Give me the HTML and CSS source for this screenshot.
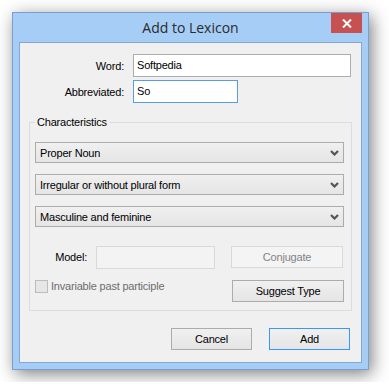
FILE: index.html
```html
<!DOCTYPE html>
<html>
<head>
<meta charset="utf-8">
<link rel="stylesheet" href="styles.css">
</head>
<body>
<div class="window">
  <div class="titlebar">
    <div class="title">Add to Lexicon</div>
    <div class="close">
      <svg width="10" height="9" viewBox="0 0 10 9"><path d="M1 0.5 L9 8.5 M9 0.5 L1 8.5" stroke="#fff" stroke-width="2" fill="none"/></svg>
    </div>
  </div>
  <div class="client">
    <div class="form-grid">
      <span class="lbl">Word:</span>
      <div class="input word">Softpedia</div>
      <span class="lbl">Abbreviated:</span>
      <div class="input abbr">So</div>
    </div>
    <fieldset class="group">
      <legend>Characteristics</legend>
      <div class="combos">
        <div class="combo"><span>Proper Noun</span><svg class="chev" width="9" height="6" viewBox="0 0 9 6"><path d="M1 1 L4.5 4.5 L8 1" stroke="#555" stroke-width="2.2" fill="none"/></svg></div>
        <div class="combo"><span>Irregular or without plural form</span><svg class="chev" width="9" height="6" viewBox="0 0 9 6"><path d="M1 1 L4.5 4.5 L8 1" stroke="#555" stroke-width="2.2" fill="none"/></svg></div>
        <div class="combo"><span>Masculine and feminine</span><svg class="chev" width="9" height="6" viewBox="0 0 9 6"><path d="M1 1 L4.5 4.5 L8 1" stroke="#555" stroke-width="2.2" fill="none"/></svg></div>
      </div>
      <div class="model-row">
        <span class="model-label">Model:</span>
        <div class="model-input"></div>
        <div class="btn disabled conjugate">Conjugate</div>
      </div>
      <div class="check-row">
        <div class="check"><span class="checkbox"></span><span>Invariable past participle</span></div>
        <div class="btn suggest">Suggest Type</div>
      </div>
    </fieldset>
    <div class="actions">
      <div class="btn">Cancel</div>
      <div class="btn default">Add</div>
    </div>
  </div>
</div>
</body>
</html>
```
FILE: styles.css
```css
* { box-sizing: border-box; }
body {
  margin: 0;
  padding: 12px;
  background: #fff;
  font-family: "Liberation Sans", Arial, sans-serif;
  font-size: 11px;
  letter-spacing: -0.2px;
  color: #000;
}
.window {
  width: 357px;
  height: 358px;
  border: 1px solid #7b9fcd;
  background: #a6cdf5;
  padding: 0 6px 6px;
  box-shadow: 3px 4px 16px rgba(0, 0, 0, 0.5);
  display: flex;
  flex-direction: column;
}
.titlebar {
  height: 29px;
  margin: 0 -6px;
  display: grid;
  grid-template-columns: 1fr auto 1fr;
  align-items: start;
}
.title {
  grid-column: 2;
  line-height: 29px;
  font-family: "Open Sans", "Noto Sans", sans-serif;
  font-size: 14px;
  letter-spacing: 0;
  color: #2b2b2b;
}
.close {
  grid-column: 3;
  justify-self: end;
  width: 31px;
  height: 20px;
  margin-right: 6px;
  background: #c75050;
  display: flex;
  align-items: center;
  justify-content: center;
}
.close svg { display: block; }
.client {
  flex: 1;
  border: 1px solid #86a7d0;
  background: #f0f0f0;
  padding-top: 11px;
}
.form-grid {
  display: grid;
  grid-template-columns: 104px auto;
  column-gap: 9px;
  row-gap: 3px;
  justify-items: start;
}
.lbl {
  justify-self: end;
  align-self: center;
}
.input {
  height: 23px;
  background: #fff;
  border: 1px solid #abadb3;
  padding: 0 3px;
  line-height: 20px;
}
.word { width: 218px; }
.abbr { width: 105px; border-color: #569de5; }
.group {
  margin: 11px 9px 0;
  padding: 12px 7px 8px 5px;
  border: 1px solid #dcdcdc;
  min-width: 0;
}
.group legend {
  margin-left: 0;
  padding: 0 2px;
  line-height: 16px;
}
.combos {
  display: flex;
  flex-direction: column;
  gap: 11px;
}
.combo {
  height: 21px;
  border: 1px solid #acacac;
  background: linear-gradient(#f0f0f0, #e5e5e5);
  display: flex;
  align-items: center;
  justify-content: space-between;
  padding: 0 4px;
}
.chev { display: block; }
.model-row {
  display: flex;
  align-items: flex-start;
  margin-top: 19px;
}
.model-label {
  width: 52px;
  text-align: right;
  line-height: 23px;
  margin-right: 9px;
}
.model-input {
  width: 119px;
  height: 23px;
  border: 1px solid #d9d9d9;
  background: #f3f3f3;
}
.btn {
  width: 112px;
  height: 22px;
  border: 1px solid #acacac;
  background: linear-gradient(#f0f0f0, #e5e5e5);
  display: flex;
  align-items: center;
  justify-content: center;
}
.btn.disabled {
  border-color: #d9d9d9;
  background: #f4f4f4;
  color: #838383;
}
.conjugate { margin-left: 16px; }
.check-row {
  display: flex;
  align-items: flex-start;
  margin-top: 11px;
}
.check {
  display: flex;
  align-items: center;
  gap: 3px;
  margin-top: -2px;
  line-height: 16px;
  color: #6d6d6d;
}
.checkbox {
  width: 13px;
  height: 13px;
  border: 1px solid #bcbcbc;
  background: #e6e6e6;
}
.suggest { margin-left: auto; }
.actions {
  display: flex;
  justify-content: flex-end;
  gap: 17px;
  margin-top: 17px;
  padding-right: 11px;
}
.actions .btn { width: 81px; }
.btn.default { border-color: #3399ff; }
```
